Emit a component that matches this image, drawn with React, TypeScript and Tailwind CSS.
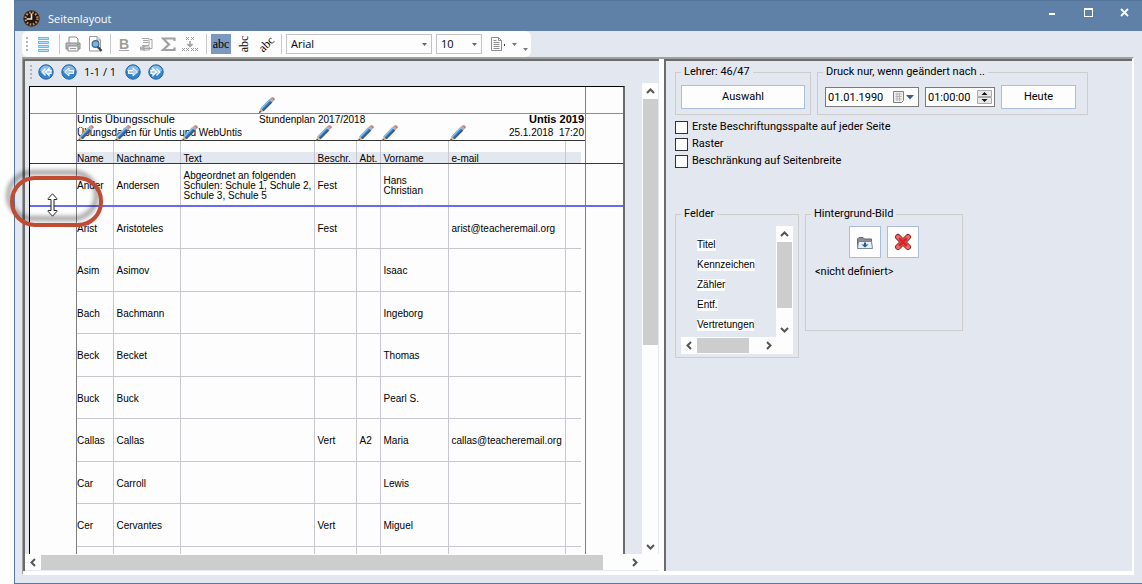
import type { ReactNode } from "react";
import clsx from "clsx";

const COLUMNS = [
  { key: "name", label: "Name", width: "w-[36px]", pencil: true },
  { key: "last", label: "Nachname", width: "w-[67px]", pencil: true },
  { key: "text", label: "Text", width: "w-[134px]", pencil: true },
  { key: "desc", label: "Beschr.", width: "w-[42px]", pencil: true },
  { key: "dept", label: "Abt.", width: "w-[24px]", pencil: true },
  { key: "first", label: "Vorname", width: "w-[68px]", pencil: true },
  { key: "mail", label: "e-mail", width: "w-[117px]", pencil: true },
  { key: "rest", label: "", width: "w-[16px]", pencil: false },
];

const TEACHERS: Record<string, string>[] = [
  {
    name: "Ander",
    last: "Andersen",
    text: "Abgeordnet an folgenden Schulen: Schule 1, Schule 2, Schule 3, Schule 5",
    desc: "Fest",
    first: "Hans Christian",
  },
  { name: "Arist", last: "Aristoteles", desc: "Fest", mail: "arist@teacheremail.org" },
  { name: "Asim", last: "Asimov", first: "Isaac" },
  { name: "Bach", last: "Bachmann", first: "Ingeborg" },
  { name: "Beck", last: "Becket", first: "Thomas" },
  { name: "Buck", last: "Buck", first: "Pearl S." },
  { name: "Callas", last: "Callas", desc: "Vert", dept: "A2", first: "Maria", mail: "callas@teacheremail.org" },
  { name: "Car", last: "Carroll", first: "Lewis" },
  { name: "Cer", last: "Cervantes", desc: "Vert", first: "Miguel" },
  {},
];

const FIELDS = ["Titel", "Kennzeichen", "Zähler", "Entf.", "Vertretungen"];

const OPTIONS = ["Erste Beschriftungsspalte auf jeder Seite", "Raster", "Beschränkung auf Seitenbreite"];

type Direction = "up" | "down" | "left" | "right";

const ARROW_PATHS: Record<Direction, string> = {
  up: "M1 6 4.5 2.5 8 6",
  down: "M1 3 4.5 6.5 8 3",
  left: "M6 1 2.5 4.5 6 8",
  right: "M3 1 6.5 4.5 3 8",
};

function ScrollButton({ dir, label }: { dir: Direction; label: string }) {
  return (
    <button type="button" aria-label={label} className="flex size-4 shrink-0 items-center justify-center bg-[#fdfdfd]">
      <svg width="9" height="9" viewBox="0 0 9 9" fill="none" stroke="#555" strokeWidth="2">
        <path d={ARROW_PATHS[dir]} />
      </svg>
    </button>
  );
}

function Pencil({ className }: { className?: string }) {
  return (
    <svg width="16" height="16" viewBox="0 0 16 16" className={className}>
      <path d="M0 16 1.5 11.5 4.5 14.2Z" fill="#d8b184" />
      <path d="M0 16 .8 13.7 2.3 15.1Z" fill="#333" />
      <path d="M1.5 11.5 10 2.6 13.2 5.4 4.5 14.2Z" fill="#2f74bd" />
      <path d="M1.5 11.5 10 2.6 11.2 3.6 2.6 12.5Z" fill="#8fc0ea" />
      <path d="M3.6 13.4 12.3 4.6 13.2 5.4 4.5 14.2Z" fill="#41576f" />
      <path d="M10 2.6 11.6 1 14.8 3.8 13.2 5.4Z" fill="#a9adb3" />
      <path d="M11.6 1Q12.6 0 14 .2 15.8.6 15.8 2.2 15.6 3.2 14.8 3.8Z" fill="#c3817a" />
    </svg>
  );
}

function Grip() {
  return (
    <svg width="3" height="15" viewBox="0 0 3 15" fill="#b4b4b4">
      {[0, 4, 8, 12].map((y) => (
        <rect key={y} y={y} width="2" height="2" />
      ))}
    </svg>
  );
}

function Separator() {
  return <span className="h-5 w-px bg-[#c8c8c8]" />;
}

function ToolButton({ label, active, children }: { label: string; active?: boolean; children: ReactNode }) {
  return (
    <button
      type="button"
      aria-label={label}
      className={clsx("flex h-5 shrink-0 items-center justify-center", active ? "w-5 bg-[#7a98c0]" : "w-[18px]")}
    >
      {children}
    </button>
  );
}

function NavButton({ label, double, back }: { label: string; double?: boolean; back?: boolean }) {
  return (
    <button type="button" aria-label={label} className={clsx("size-4", back && "-scale-x-100")}>
      <svg width="16" height="16" viewBox="0 0 16 16">
        <circle cx="8" cy="8" r="7.2" fill="#2f86d0" stroke="#2a5f98" />
        <path d="M2 7a6 5.4 0 0 1 12 0Q8 9 2 7Z" fill="#83bde9" />
        {double ? (
          <path
            d="M3 6.500H5V4.500L8.500 8 5 11.500V9.500H3ZM8.500 4.500 12 8 8.500 11.500"
            fill="#a9cdec"
            stroke="#fff"
            strokeWidth="1.2"
          />
        ) : (
          <path d="M3.5 6.5H8V4L12.5 8 8 12V9.5H3.5Z" fill="#a9cdec" stroke="#fff" />
        )}
      </svg>
    </button>
  );
}

function TitleBar() {
  return (
    <header className="flex h-[31px] shrink-0 items-center border-t border-[#55749a] bg-[#6081a7] pl-2 text-white">
      <svg width="17" height="17" viewBox="0 0 17 17" className="mt-1">
        <circle cx="8.5" cy="8.5" r="8" fill="#1f1813" />
        <circle cx="8.5" cy="8.5" r="6" fill="none" stroke="#c98a55" strokeWidth="2.4" strokeDasharray="1.6 1.54" />
        <circle cx="8.5" cy="8.5" r="7.7" fill="none" stroke="#5a3a24" strokeWidth=".7" />
        <path d="M8.500 3.500V9H3.800" fill="none" stroke="#f3e6d6" strokeWidth="1.6" />
      </svg>
      <h1 className="mt-1.5 ml-2 font-['Open_Sans',sans-serif] text-[11px] leading-4">Seitenlayout</h1>
      <div className="mb-2 ml-auto flex">
        <button type="button" aria-label="Minimieren" className="flex h-4 w-9 items-center justify-center">
          <svg width="10" height="10" viewBox="0 0 10 10">
            <path d="M2 6h6v2H2z" fill="#fff" />
          </svg>
        </button>
        <button type="button" aria-label="Maximieren" className="flex h-4 w-9 items-center justify-center">
          <svg width="9" height="9" viewBox="0 0 9 9">
            <path d="M0 0h9v9H0zM1 2v6h7V2z" fill="#fff" fillRule="evenodd" />
          </svg>
        </button>
        <button type="button" aria-label="Schließen" className="flex h-4 w-9 items-center justify-center">
          <svg width="9" height="9" viewBox="0 0 9 9">
            <path d="M1 1 8 8M8 1 1 8" stroke="#fff" strokeWidth="1.8" />
          </svg>
        </button>
      </div>
    </header>
  );
}

function ComboBox({ label, value, className }: { label: string; value: string; className: string }) {
  return (
    <div className={clsx("relative", className)}>
      <select
        aria-label={label}
        defaultValue={value}
        className="block h-5 w-full appearance-none border border-[#c4c4c4] bg-[#fdfdfd] px-1 font-['Open_Sans',sans-serif] text-[11px] leading-4"
      >
        <option>{value}</option>
      </select>
      <svg width="5" height="3" viewBox="0 0 5 3" className="absolute top-[9px] right-[5px]">
        <path d="M0 0h5L2.5 3z" fill="#666" />
      </svg>
    </div>
  );
}

function Toolbar() {
  return (
    <div className="flex h-[26px] w-[509px] shrink-0 items-center rounded-md bg-[#fdfdfd] pl-1">
      <Grip />
      <div className="ml-[5px] flex items-center">
        <ToolButton label="Zeilen">
          <svg width="11" height="15" viewBox="0 0 11 15" fill="#b5e2fb" stroke="#62baea">
            <path d="M.5.5h10v2H.5zM.5 4.500h10v2H.5zM.5 8.500h10v2H.5zM.5 12.500h10v2H.5z" />
          </svg>
        </ToolButton>
      </div>
      <div className="ml-[7px] flex items-center gap-1">
        <Separator />
        <ToolButton label="Drucken">
          <svg width="16" height="16" viewBox="0 0 16 16">
            <path d="M4 1h7l2 2v5H4z" fill="#fff" stroke="#888" />
            <path d="M1 7h14v6H1z" fill="#b9bcc0" stroke="#888" />
            <path d="M3 10h10v5H3z" fill="#f5f5f5" stroke="#888" />
            <path d="M5 12.5h6" stroke="#999" />
            <path d="M12 8h2v1h-2z" fill="#63a84a" />
          </svg>
        </ToolButton>
        <ToolButton label="Seitenansicht">
          <svg width="16" height="16" viewBox="0 0 16 16">
            <path d="M2.5.5H10L13.5 4v11h-11z" fill="#fff" stroke="#999" />
            <path d="M10 .5V4h3.5" fill="none" stroke="#999" />
            <path d="m10.5 10.5 4 4.5" stroke="#444" strokeWidth="2.4" />
            <circle cx="8.5" cy="8" r="3.4" fill="#79b3e6" stroke="#3f6388" strokeWidth="1.2" />
          </svg>
        </ToolButton>
      </div>
      <div className="ml-1.5 flex items-center gap-1">
        <Separator />
        <ToolButton label="Fett">
          <span className="border-b border-[#aaa] font-['Liberation_Sans',sans-serif] text-sm leading-3 font-bold text-[#9b9b9b]">
            B
          </span>
        </ToolButton>
        <ToolButton label="Umbruch">
          <svg width="14" height="14" viewBox="0 0 14 14" fill="none" stroke="#a5a5a5">
            <path d="M3 1.500h7v7H3M4 3.500h5M4 5.500h5" />
            <path d="M11 2.500h2v9H1.500M1.500 10h9v3h-9z" />
            <path d="M6 8.500 3 11.500l3 2" strokeWidth="1.5" />
          </svg>
        </ToolButton>
        <ToolButton label="Summe">
          <svg width="15" height="15" viewBox="0 0 15 15" fill="none">
            <path d="M13.5 4V1.5H2L8 7.5 2 13H13.5V10.5" stroke="#a0a0a0" strokeWidth="2.2" />
          </svg>
        </ToolButton>
        <ToolButton label="Zeilenabstand">
          <svg width="16" height="16" viewBox="0 0 16 16" fill="none" stroke="#999">
            <path d="m4 1 3 3m0-3-3 3m5-3 3 3m0-3-3 3M0 12l3 3m0-3-3 3m4-3 3 3m0-3-3 3m5-3 3 3m0-3-3 3m4-3 3 3m0-3-3 3" />
            <path d="M8 5v5M5.5 8 8 10.5 10.5 8" strokeWidth="1.5" />
          </svg>
        </ToolButton>
      </div>
      <div className="ml-[7px] flex items-center gap-1 font-['Liberation_Serif',serif] text-xs leading-4">
        <Separator />
        <ToolButton label="Horizontal" active>
          abc
        </ToolButton>
        <ToolButton label="Vertikal">
          <span className="-rotate-90">abc</span>
        </ToolButton>
        <ToolButton label="Schräg">
          <span className="-rotate-45">abc</span>
        </ToolButton>
      </div>
      <div className="ml-1.5 flex items-center gap-1">
        <Separator />
        <ComboBox label="Schriftart" value="Arial" className="w-[146px]" />
        <ComboBox label="Schriftgröße" value="10" className="w-[46px]" />
        <button type="button" aria-label="Seitenformat" className="ml-1 flex items-center gap-1.5">
          <svg width="16" height="16" viewBox="0 0 16 16" fill="none" stroke="#8c8c8c">
            <path d="M1.500 1.500h7l3 3v10h-10zM8.500 1.500v3h3M3.500 4.500h3M3.500 6.500h6M3.500 8.500h6M3.500 10.500h6M3.500 12.500h6" />
            <path d="M14.500 8v2" stroke="#333" />
          </svg>
          <svg width="5" height="3" viewBox="0 0 5 3">
            <path d="M0 0h5L2.5 3z" fill="#777" />
          </svg>
        </button>
        <svg width="5" height="3" viewBox="0 0 5 3" className="mt-2.5 ml-0.5">
          <path d="M0 0h5L2.5 3z" fill="#777" />
        </svg>
      </div>
    </div>
  );
}

function TeacherTable() {
  return (
    <table className="w-[504px] table-fixed border-collapse text-left text-[10px] leading-[10px]">
      <thead>
        <tr className="h-[22px]">
          {COLUMNS.map((col) => (
            <th
              key={col.key}
              className={clsx(
                col.width,
                "relative border-r border-[#c6c8cd] bg-linear-to-b from-transparent from-50% to-[#e3e8f0] to-50% p-0 align-bottom leading-[8px] font-normal last:border-r-0",
              )}
            >
              {col.pencil && <Pencil className="absolute -top-4 left-px" />}
              <span className={col.key === "name" ? "" : "pl-[3px]"}>{col.label}</span>
            </th>
          ))}
        </tr>
      </thead>
      <tbody>
        {TEACHERS.map((teacher, i) => (
          <tr key={i} className={i % 2 === 0 ? "h-[43px]" : "h-[42px]"}>
            {COLUMNS.map((col) => (
              <td
                key={col.key}
                className={clsx(
                  "border-r border-b border-[#c6c8cd] pt-[3px] pr-0 pb-0 align-middle last:border-r-0",
                  col.key === "name" ? "pl-0" : "pl-[3px]",
                )}
              >
                {teacher[col.key]}
              </td>
            ))}
          </tr>
        ))}
      </tbody>
    </table>
  );
}

function Paper() {
  return (
    <div className="relative w-[596px] border-t border-r-2 border-l border-t-black border-r-[#6b6b6b] border-l-black bg-[#fdfdfd] font-['Liberation_Sans',sans-serif] text-black">
      <div className="ml-[46px] w-[510px] border-x border-[#808080]">
        <div className="relative h-[26px]">
          <Pencil className="absolute bottom-0 left-[182px]" />
        </div>
        <div className="h-[28px] border-b border-[#333] pr-px">
          <div className="grid grid-cols-[182px_1fr_auto] items-center text-[11px] leading-[13px]">
            <span>Untis Übungsschule</span>
            <span className="text-[10px]">Stundenplan 2017/2018</span>
            <b>Untis 2019</b>
          </div>
          <div className="flex justify-between text-[10px] leading-[13px]">
            <span>Übungsdaten für Untis und WebUntis</span>
            <span className="whitespace-pre">25.1.2018{"  "}17:20</span>
          </div>
        </div>
        <TeacherTable />
      </div>
      {/* margin and row guides */}
      <div className="absolute inset-x-0 top-[26px] h-px bg-[#8a8c90]" />
      <div className="absolute inset-x-0 top-[76px] h-px bg-[#2222e0]" />
      <div className="absolute inset-x-0 top-[118px] h-0.5 bg-[#6a6aee]" />
    </div>
  );
}

function Callout() {
  return (
    <div className="pointer-events-none absolute top-[176px] left-[10px] h-[51px] w-[93px]">
      <div className="absolute -top-1.5 -left-1 size-full rounded-full border-5 border-black/35 blur-[2px]" />
      <div className="absolute inset-0 rounded-[25px] border-4 border-[#c04a32]" />
      <svg width="11" height="24" viewBox="0 0 11 24" className="absolute top-[17px] left-[37px]">
        <path
          d="M5.5.8 9.8 5.500v1H7v11h2.800v1L5.500 23.200 1.200 18.500v-1H4v-11H1.200v-1Z"
          fill="#fff"
          stroke="#222"
        />
      </svg>
    </div>
  );
}

function PreviewPane() {
  return (
    <section className="flex w-[636px] shrink-0 flex-col border-t-2 border-l-2 border-[#6b6b6b] bg-[#e3e8f0]">
      <nav className="flex h-[22px] shrink-0 items-center pl-[5px]">
        <Grip />
        <div className="ml-[5px] flex items-center gap-[7px]">
          <NavButton label="Erste Seite" double back />
          <NavButton label="Vorherige Seite" back />
          <span className="w-[34px] font-['Open_Sans',sans-serif] text-[11px] leading-4 whitespace-nowrap">1-1 / 1</span>
          <NavButton label="Nächste Seite" />
          <NavButton label="Letzte Seite" double />
        </div>
      </nav>
      <div className="flex min-h-0 flex-1">
        <div className="flex-1 overflow-hidden pt-[3px] pl-1">
          <Paper />
        </div>
        <div className="flex w-[17px] flex-col border-r border-[#e3e8f0] bg-[#fdfdfd]">
          <ScrollButton dir="up" label="Nach oben" />
          <div className="flex-1">
            <div className="ml-px h-[56%] w-[15px] bg-[#cdcdcd]" />
          </div>
          <ScrollButton dir="down" label="Nach unten" />
        </div>
      </div>
      <div className="flex h-[17px] shrink-0 items-center border-b border-[#e3e8f0] bg-[#fdfdfd] pr-[17px]">
        <ScrollButton dir="left" label="Nach links" />
        <div className="flex-1">
          <div className="h-[15px] w-[96%] bg-[#cdcdcd]" />
        </div>
        <ScrollButton dir="right" label="Nach rechts" />
      </div>
    </section>
  );
}

function Group({ title, className, children }: { title: string; className: string; children: ReactNode }) {
  return (
    <fieldset className={clsx("border border-[#cdcdcd] px-[5px]", className)}>
      <legend className="px-[3px] leading-4">{title}</legend>
      {children}
    </fieldset>
  );
}

function PushButton({ children, label, className }: { children: ReactNode; label?: string; className: string }) {
  return (
    <button
      type="button"
      aria-label={label}
      className={clsx("flex items-center justify-center border border-[#a9bfd8] bg-[#fdfdfd]", className)}
    >
      {children}
    </button>
  );
}

function FieldList() {
  return (
    <div className="mt-1 mb-[3px] w-[112px]">
      <div className="flex h-[111px]">
        <ul className="flex flex-1 flex-col gap-2 pt-[13px] pl-4 font-['Liberation_Sans',sans-serif] text-[10px] leading-3">
          {FIELDS.map((field) => (
            <li key={field}>
              <span className="block w-fit bg-[#fdfdfd]">{field}</span>
            </li>
          ))}
        </ul>
        <div className="flex w-[17px] flex-col items-center bg-[#fdfdfd]">
          <ScrollButton dir="up" label="Felder nach oben" />
          <div className="w-[15px] flex-1">
            <div className="h-[84%] bg-[#cdcdcd]" />
          </div>
          <ScrollButton dir="down" label="Felder nach unten" />
        </div>
      </div>
      <div className="flex h-[17px] items-center bg-[#fdfdfd] pr-[17px]">
        <ScrollButton dir="left" label="Felder nach links" />
        <div className="flex-1">
          <div className="h-[15px] w-[83%] bg-[#cdcdcd]" />
        </div>
        <ScrollButton dir="right" label="Felder nach rechts" />
      </div>
    </div>
  );
}

function SettingsPane() {
  return (
    <section className="flex-1 border-t-2 border-l-2 border-[#6b6b6b] pt-[3px] pl-[9px] font-['Roboto',sans-serif] text-[11px] leading-4">
      <div className="flex gap-1.5">
        <Group title="Lehrer: 46/47" className="w-[135px]">
          <PushButton className="mt-[5px] mb-[5px] h-6 w-[124px]">Auswahl</PushButton>
        </Group>
        <Group title="Druck nur, wenn geändert nach .." className="w-[271px]">
          <div className="mt-[5px] mb-[5px] ml-0.5 flex items-center gap-1.5">
            <div className="relative w-[94px]">
              <input
                aria-label="Datum"
                defaultValue="01.01.1990"
                className="block h-5 w-full border border-[#7a7a7a] bg-[#fdfdfd] px-0.5"
              />
              <svg width="22" height="14" viewBox="0 0 22 14" className="absolute top-1 right-1">
                <path d="M.5.5h10v9l-2 2h-8z" fill="#eee" stroke="#808080" />
                <path d="M2.5 3h6M2.5 5.5h6M2.5 8h6M4 2v8M6.5 2v8" stroke="#b5b5b5" />
                <path d="M13 4h8l-4 4.5z" fill="#3d5d8c" />
              </svg>
            </div>
            <div className="relative w-[70px]">
              <input
                aria-label="Uhrzeit"
                defaultValue="01:00:00"
                className="block h-5 w-full border border-[#7a7a7a] bg-[#fdfdfd] px-0.5"
              />
              <svg width="15" height="14" viewBox="0 0 15 14" className="absolute top-[3px] right-[3px]">
                <path d="M.5.5h14v6H.5zM.5 7.5h14v6H.5z" fill="#e8e8e8" stroke="#aaa" />
                <path d="M4.5 5h6l-3-3zM4.5 9h6l-3 3z" fill="#111" />
              </svg>
            </div>
            <PushButton className="h-6 w-[75px]">Heute</PushButton>
          </div>
        </Group>
      </div>
      <div className="mt-1 flex flex-col gap-px">
        {OPTIONS.map((option) => (
          <label key={option} className="flex w-fit items-center gap-1">
            <input type="checkbox" className="size-[13px] appearance-none border border-[#333] bg-[#fdfdfd]" />
            {option}
          </label>
        ))}
      </div>
      <div className="mt-[37px] flex items-start gap-1.5">
        <Group title="Felder" className="w-[124px]">
          <FieldList />
        </Group>
        <Group title="Hintergrund-Bild" className="w-[158px]">
          <div className="mt-1 flex justify-center gap-1.5">
            <PushButton label="Bild wählen" className="size-8">
              <svg width="16" height="16" viewBox="0 0 16 16">
                <path d="M.5 14V5L2 3.500h4L7.500 5h7v9z" fill="#8a8f94" stroke="#666" />
                <path d="M1.500 7.500h13l1 7H.5z" fill="#e6eff7" stroke="#7a8794" />
                <path d="M7 8.500h2v2h2.500L8 13.500 4.500 10.500H7z" fill="#26588f" />
              </svg>
            </PushButton>
            <PushButton label="Bild löschen" className="size-8">
              <svg width="18" height="18" viewBox="0 0 18 18" fill="none" strokeLinecap="round">
                <path d="M4 4 14 14M14 4 4 14" stroke="#8e2a2a" strokeWidth="6" />
                <path d="M4 4 14 14M14 4 4 14" stroke="#ee6a6a" strokeWidth="4" />
                <path d="M6 6 12 12M12 6 6 12" stroke="#dd2424" strokeWidth="3" />
              </svg>
            </PushButton>
          </div>
          <p className="mt-1.5 mb-[50px] pl-1">&lt;nicht definiert&gt;</p>
        </Group>
      </div>
    </section>
  );
}

export default function App() {
  return (
    <div className="relative h-screen overflow-hidden bg-white pl-3.5 text-black">
      <div className="flex h-full flex-col border-b border-l border-[#5b7aa3] bg-[#e3e8f0]">
        <TitleBar />
        <div className="flex min-h-0 flex-1 flex-col pr-2 pb-2 pl-[7px]">
          <Toolbar />
          <main className="flex min-h-0 flex-1 border-t-2 border-r-2 border-b-2 border-l border-t-[#a0a0a0] border-r-white border-b-white border-l-[#a0a0a0]">
            <div className="flex min-h-0 flex-1 gap-[5px] border-b-2 border-[#fdfdfd] bg-[#fdfdfd]">
              <PreviewPane />
              <div className="flex flex-1 bg-[#e3e8f0]">
                <SettingsPane />
              </div>
            </div>
          </main>
        </div>
      </div>
      <Callout />
    </div>
  );
}
